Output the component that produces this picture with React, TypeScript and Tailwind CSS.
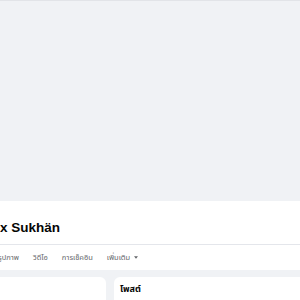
export default function App() {
  const tabs = ['วิดีโอ', 'การเช็คอิน'];

  return (
    <div
      className="w-[300px] h-[300px] overflow-hidden bg-[#f0f2f5] flex flex-col"
      style={{ fontFamily: '"Segoe UI", "Liberation Sans", "Noto Sans", "Noto Sans Thai", sans-serif' }}
    >
      {/* cover area */}
      <div className="h-[201px] shrink-0 border-t border-[#e2e4e8]" />

      {/* profile header */}
      <div className="bg-white shrink-0">
        <div className="h-[44px] flex items-end pb-[10px] border-b border-[#e4e6eb]">
          <h1 className="text-[13.5px] leading-none font-bold text-[#050505] whitespace-nowrap">x Sukhän</h1>
        </div>
        <div className="h-[25px] flex items-center gap-[14px] text-[7.5px] text-[#65676b] whitespace-nowrap">
          <span className="-ml-[2px]">รูปภาพ</span>
          {tabs.map((t) => (
            <span key={t}>{t}</span>
          ))}
          <span className="flex items-center gap-[4px]">
            เพิ่มเติม
            <svg width="4" height="3" viewBox="0 0 10 6">
              <path d="M0 0h10L5 6z" fill="#65676b" />
            </svg>
          </span>
        </div>
      </div>

      {/* content */}
      <div className="flex gap-[8px] pt-[7px] flex-1">
        <div className="w-[106px] bg-white rounded-tr-[6px]" />
        <div className="flex-1 bg-white rounded-tl-[6px] px-[6px] pt-[8px]">
          <h2 className="text-[9px] leading-none font-bold text-[#050505]">โพสต์</h2>
        </div>
      </div>
    </div>
  );
}
